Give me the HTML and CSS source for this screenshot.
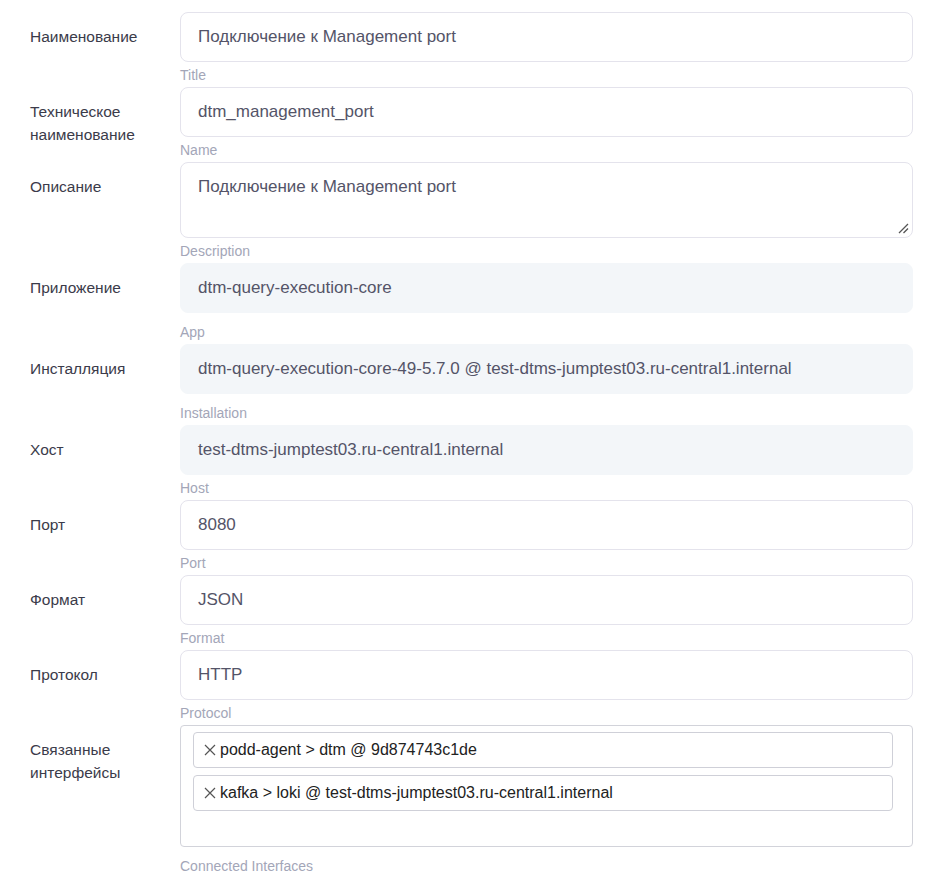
FILE: index.html
```html
<!DOCTYPE html>
<html lang="ru">
<head>
<meta charset="utf-8">
<title>Интерфейс</title>
<link rel="stylesheet" href="styles.css">
</head>
<body>
<form class="form">
  <div class="row">
    <div class="label">Наименование</div>
    <div class="field">
      <div class="input">Подключение к Management port</div>
      <div class="hint">Title</div>
    </div>
  </div>
  <div class="row">
    <div class="label">Техническое наименование</div>
    <div class="field">
      <div class="input">dtm_management_port</div>
      <div class="hint">Name</div>
    </div>
  </div>
  <div class="row">
    <div class="label">Описание</div>
    <div class="field">
      <div class="input textarea">Подключение к Management port
        <svg class="grip" width="12" height="12" viewBox="0 0 12 12"><path d="M11 2 L2 11 M11 6.5 L6.5 11" stroke="#555" stroke-width="1.3" fill="none"/></svg>
      </div>
      <div class="hint">Description</div>
    </div>
  </div>
  <div class="row">
    <div class="label">Приложение</div>
    <div class="field">
      <div class="input readonly">dtm-query-execution-core</div>
      <div class="hint spaced">App</div>
    </div>
  </div>
  <div class="row">
    <div class="label">Инсталляция</div>
    <div class="field">
      <div class="input readonly">dtm-query-execution-core-49-5.7.0 @ test-dtms-jumptest03.ru-central1.internal</div>
      <div class="hint spaced">Installation</div>
    </div>
  </div>
  <div class="row">
    <div class="label">Хост</div>
    <div class="field">
      <div class="input readonly">test-dtms-jumptest03.ru-central1.internal</div>
      <div class="hint">Host</div>
    </div>
  </div>
  <div class="row">
    <div class="label">Порт</div>
    <div class="field">
      <div class="input">8080</div>
      <div class="hint">Port</div>
    </div>
  </div>
  <div class="row">
    <div class="label">Формат</div>
    <div class="field">
      <div class="input">JSON</div>
      <div class="hint">Format</div>
    </div>
  </div>
  <div class="row">
    <div class="label">Протокол</div>
    <div class="field">
      <div class="input">HTTP</div>
      <div class="hint">Protocol</div>
    </div>
  </div>
  <div class="row">
    <div class="label">Связанные интерфейсы</div>
    <div class="field">
      <div class="multi">
        <div class="chip"><svg class="x" width="12" height="12" viewBox="0 0 12 12"><path d="M1 1 L11 11 M11 1 L1 11" stroke="#555" stroke-width="1.2" fill="none"/></svg>podd-agent &gt; dtm @ 9d874743c1de</div>
        <div class="chip"><svg class="x" width="12" height="12" viewBox="0 0 12 12"><path d="M1 1 L11 11 M11 1 L1 11" stroke="#555" stroke-width="1.2" fill="none"/></svg>kafka &gt; loki @ test-dtms-jumptest03.ru-central1.internal</div>
      </div>
      <div class="hint spaced">Connected Interfaces</div>
    </div>
  </div>
</form>
</body>
</html>
```
FILE: styles.css
```css
html, body {
  margin: 0;
  padding: 0;
  background: #ffffff;
}
body {
  font-family: "Liberation Sans", Arial, sans-serif;
}
.form {
  padding: 12px 33px 0 30px;
  display: flex;
  flex-direction: column;
}
.row {
  display: grid;
  grid-template-columns: 150px 1fr;
}
.label {
  padding-top: 13px;
  font-size: 15.5px;
  line-height: 23px;
  color: #3b3b4a;
  padding-right: 20px;
}
.field {
  display: flex;
  flex-direction: column;
}
.input {
  box-sizing: border-box;
  height: 50px;
  border: 1px solid #e4e3ec;
  border-radius: 8px;
  padding: 0 17px;
  font-size: 17px;
  line-height: 48px;
  color: #545468;
  background: #fff;
  white-space: nowrap;
  overflow: hidden;
}
.input.textarea {
  height: 76px;
  position: relative;
}
.grip {
  position: absolute;
  right: 3px;
  bottom: 3px;
}
.input.readonly {
  background: #f3f6f9;
  border-color: #f3f6f9;
}
.hint {
  font-size: 14px;
  line-height: 24px;
  padding-top: 1px;
  color: #a3a6b8;
}
.hint.spaced {
  padding-top: 7px;
}
.multi {
  box-sizing: border-box;
  height: 122px;
  border: 1px solid #d2d3da;
  border-radius: 4px;
  padding: 6px 19px 0 12px;
  display: flex;
  flex-direction: column;
  gap: 7px;
}
.chip {
  box-sizing: border-box;
  height: 36px;
  border: 1px solid #cfd0d8;
  border-radius: 4px;
  padding: 0 10px;
  display: flex;
  align-items: center;
  gap: 4px;
  font-size: 16px;
  color: #222;
}
.x {
  flex: none;
}
```
